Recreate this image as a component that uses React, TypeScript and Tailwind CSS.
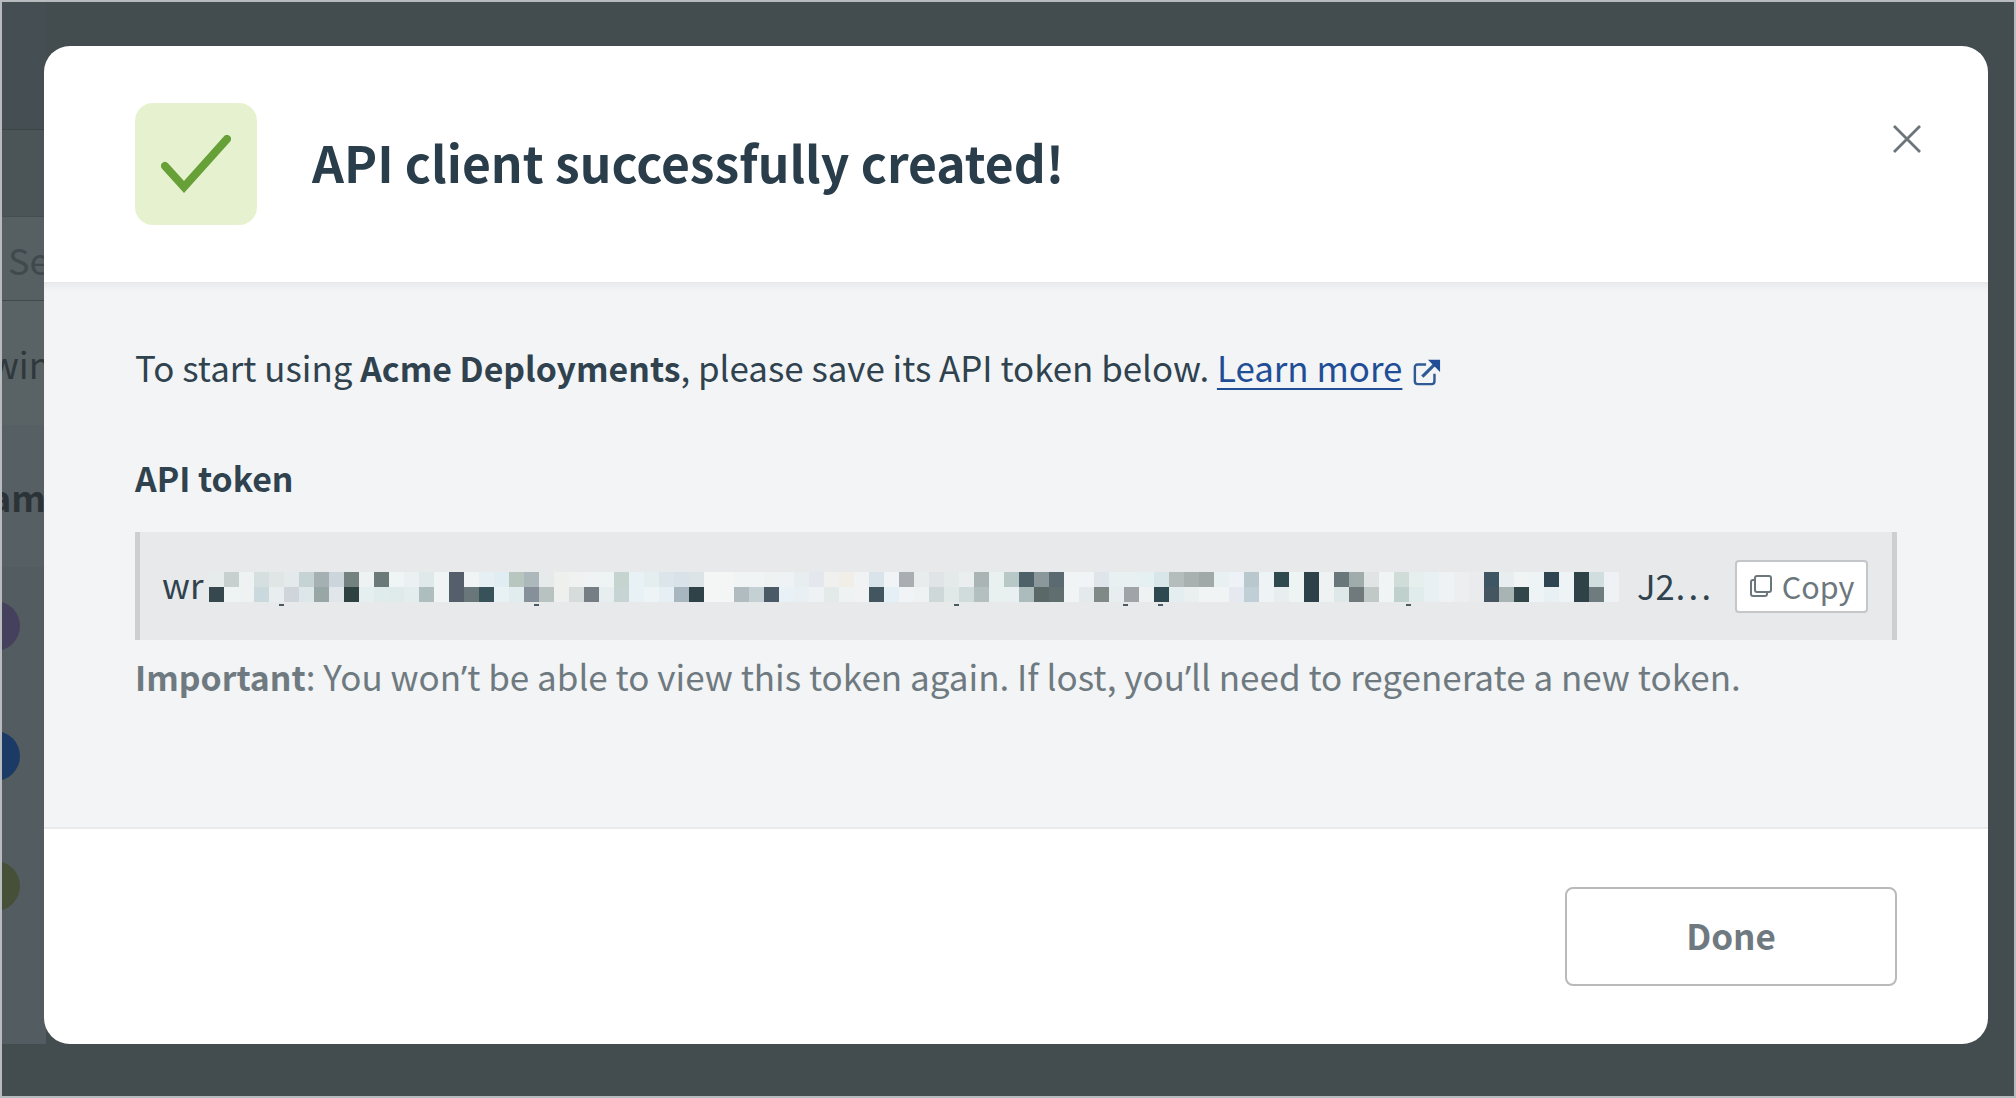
import React from 'react';

const sans = 'font-["Noto_Sans_CJK_SC","Noto_Sans",sans-serif] [font-feature-settings:"palt"]';

// pixelated part of the token: [top row colour, bottom row colour] per 15px column
const pixels: [string, string][] = [
  ['e6ebeb', '36474d'], ['c8cfcf', 'eef3f3'], ['eef2f3', 'eef2f3'], ['d5dfe0', 'c9d9dd'], ['e0e6e6', 'e8eef0'],
  ['e4eaec', 'cfd5da'], ['c6d3d5', 'dde6e8'], ['a4b0b2', '98a6a6'], ['ccd5db', 'e0e6ea'], ['74827f', '2f4242'],
  ['eef2f3', 'e6eff0'], ['6b7a78', 'e0ecec'], ['eff4f4', 'dfeaea'], ['ebf1f2', 'e4eded'], ['e0e9ea', 'aebdbd'],
  ['f0f4f5', 'f0f4f5'], ['545f6b', '545f6b'], ['f0f4f4', '69767a'], ['e6f0f4', '375258'], ['e0eef4', 'e8f2f5'],
  ['b8c6c0', 'e0ecee'], ['adb8bc', '85909a'], ['e6eaea', 'b8c2c0'], ['eef0ee', 'eef0ee'], ['f0f2f2', 'd6dcdc'],
  ['f0f3f3', '747e84'], ['eef3f4', 'e6eef0'], ['c6d4d0', 'c6d4d4'], ['e8f2f6', 'e8f2f6'], ['e4eeee', 'eef4f6'],
  ['dce6ea', 'e6f0f4'], ['d8e2e8', 'a8b6c0'], ['dce4e8', '2e4248'], ['f4f6f6', 'f4f6f6'], ['f4f6f6', 'f4f6f6'],
  ['f0f4f4', 'b0bcc0'], ['f0f4f4', 'c4d0d4'], ['eef2f2', '4a5a66'], ['eef2f4', 'e8f2f6'], ['e8eef0', 'e8f0f4'],
  ['e4e8ee', 'eef2f4'], ['f0f0ee', 'e4eaea'], ['f0eee6', 'eef2f2'], ['f0f2f4', 'f0f2f4'], ['d8e4ea', '435660'],
  ['f0f4f6', 'e4f0f6'], ['a8aeb2', 'f0f4f6'], ['e8ecec', 'eef2f2'], ['e0e4e6', 'ced8d8'], ['e4eaea', 'e0e8e8'],
  ['eaeeee', 'd0dcdc'], ['aab4b4', 'b4c0c0'], ['e8f0f0', 'e8f0f0'], ['b8c8c6', 'e8f0f2'], ['4e6068', 'acbcbc'],
  ['8a989c', '5a6868'], ['5a6a70', '606e70'], ['f0f4f4', 'f0f4f4'], ['f0f4f6', 'e4eaec'], ['dfe5ea', '808888'],
  ['e8f0f2', 'e8eef0'], ['e8f0f2', 'a0a4a8'], ['e4f0f2', 'eef2f2'], ['d8e6ea', '2e4a50'], ['b4bcbc', 'e4eef0'],
  ['a8b0b0', 'eaf0f0'], ['a0a8a8', 'f0f4f4'], ['e8f0f2', 'f0f4f4'], ['eef2f6', 'e6eaf0'], ['b8c8cc', 'c0cfd6'],
  ['eef4f6', 'eef4f6'], ['2e4a4e', 'e8eef0'], ['eef4f4', 'eef4f4'], ['2c4248', '2c4248'], ['eef2f2', 'eef2f2'],
  ['68787a', 'dfe8e8'], ['a0abab', '70797c'], ['e0e4e4', 'c0c8c8'], ['f0f4f4', 'f0f4f4'], ['d0dcd8', 'c0d0cc'],
  ['e6eeee', 'e0ecec'], ['e8f0f4', 'e8f0f4'], ['eef2f4', 'eef2f4'], ['eceef0', 'eceef0'], ['e9ebed', 'e9ebed'],
  ['3e5664', '465660'], ['e8eef0', 'a8b4b4'], ['f0f4f4', '33464a'], ['eef4f6', 'eef4f6'], ['2e4450', 'e8f0f4'],
  ['eef4f6', 'eef4f6'], ['2e4248', '2e4248'], ['d0dee0', '6e7c80'], ['eef2f4', 'eef2f4'],
];

const ticks = [70, 325, 745, 914, 949, 1197];

function TokenPixels() {
  return (
    <svg width={1411} height={36} viewBox="0 0 1411 36" shapeRendering="crispEdges" className="shrink-0">
      {pixels.map(([top, bottom], i) => (
        <g key={i}>
          <rect x={i * 15} y={0} width={15} height={15} fill={`#${top}`} />
          <rect x={i * 15} y={15} width={15} height={15} fill={`#${bottom}`} />
        </g>
      ))}
      {ticks.map((x) => (
        <rect key={x} x={x} y={32} width={5} height={2} fill="#4a5a62" />
      ))}
    </svg>
  );
}

// the CJK font draws ’ full width, so it comes from Noto Sans
function Apos() {
  return <span className='font-["Noto_Sans",sans-serif]'>’</span>;
}

export default function App() {
  return (
    <div className={`relative h-[1098px] w-[2016px] overflow-hidden border-2 border-[#b9bcbe] bg-[#434d50] pl-[42px] pt-[44px] ${sans}`}>
      {/* page behind the dialog, only a strip of it shows */}
      <div className="absolute left-0 top-0 flex h-[1042px] w-[44px] flex-col overflow-hidden text-[36px] leading-none">
        <div className="h-[128px] shrink-0 border-b border-[#3c4548] bg-[#454f53]" />
        <div className="h-[87px] shrink-0 border-b border-[#454e51] bg-[#4b5457]" />
        <div className="flex h-[84px] shrink-0 items-center border-b border-[#42494d] bg-[#565f62] pl-[6px] text-[#3f494e]">Se</div>
        <div className="flex h-[124px] shrink-0 items-center whitespace-nowrap bg-[#596265] pl-0 text-[#2f383c]">
          <span className="-ml-[12px]">win</span>
        </div>
        <div className="flex h-[142px] shrink-0 items-center whitespace-nowrap bg-[#565f63] font-bold text-[#2b3337]">
          <span className="-ml-[12px]">am</span>
        </div>
        <div className="flex flex-1 flex-col gap-[80px] bg-[#535c60] pt-[34px]">
          <div className="-ml-[32px] h-[50px] w-[50px] shrink-0 rounded-full bg-[#45405c]" />
          <div className="-ml-[32px] h-[50px] w-[50px] shrink-0 rounded-full bg-[#1c3a66]" />
          <div className="-ml-[32px] h-[50px] w-[50px] shrink-0 rounded-full bg-[#464f38]" />
        </div>
      </div>

      <div className="relative flex h-[998px] w-[1944px] flex-col overflow-hidden rounded-[26px] bg-white">
        <button className="absolute right-[66px] top-[78px] text-[#6b7478]">
          <svg width={30} height={30} viewBox="0 0 30 30" fill="none" stroke="currentColor" strokeWidth={2.8}>
            <path d="M2 2 L28 28 M28 2 L2 28" />
          </svg>
        </button>

        <div className="flex h-[236px] shrink-0 items-center gap-[55px] px-[91px]">
          <div className="flex h-[122px] w-[122px] items-center justify-center rounded-[18px] bg-[#e6f2cf]">
            <svg width={70} height={58} viewBox="0 0 70 58" fill="none" stroke="#66a036" strokeWidth={8} strokeLinecap="round">
              <path d="M4 31 L23 52 L66 4" />
            </svg>
          </div>
          <h1 className="-mt-[5px] text-[49.8px] font-bold leading-none text-[#2a3d4a]">API client successfully created!</h1>
        </div>

        <div className="flex flex-1 flex-col border-b-2 border-b-[#e8eaec] bg-[#f2f4f6] px-[91px] pt-[62px] shadow-[inset_0_8px_8px_-6px_#e0e2e4]">
          <p className="h-[46px] whitespace-pre text-[34.9px] leading-[46px] text-[#2f424e]">
            To start using <b className="text-[33.8px] font-bold">Acme Deployments</b>, please save its API token below. <a className="text-[#1f4e96] underline decoration-2 underline-offset-[6px]">Learn more</a>
            <svg width={28} height={28} viewBox="0 0 30 30" fill="none" className="ml-[11px] inline-block align-[-4px]">
              <path d="M14 7 H5 Q2 7 2 10 V25 Q2 28 5 28 H20 Q23 28 23 25 V17" stroke="#2f5a94" strokeWidth={2.6} />
              <path d="M10 20 L23 7" stroke="#2f5a94" strokeWidth={3.4} />
              <path d="M16 2 H29 V15 Z" fill="#1f4e96" />
            </svg>
          </p>

          <label className="mt-[65px] text-[33.8px] font-bold leading-[46px] text-[#2f424e]">API token</label>

          <div className="mt-[31px] flex h-[108px] items-center border-x-[5px] border-x-[#ccd0d2] bg-[#e8e9eb] pl-[22px]">
            <span className="-mt-[4px] w-[47px] shrink-0 text-[34.8px] leading-none text-[#2f424e]">wr</span>
            <div className="mt-[8px] flex w-[1428px] shrink-0 items-center">
              <TokenPixels />
            </div>
            <span className="-mt-[2px] shrink-0 whitespace-nowrap text-[34.5px] leading-none text-[#2f424e]">J2…</span>
            <button className="ml-auto mr-[24px] flex h-[53px] w-[133px] shrink-0 items-center justify-center gap-[9px] rounded-[4px] border-2 border-[#c4c7c9] bg-white text-[30.5px] leading-none text-[#6c777d]">
              <svg width={24} height={24} viewBox="0 0 24 24" fill="none" stroke="currentColor" strokeWidth={2}>
                <rect x={6} y={2} width={16} height={16} rx={2} fill="white" />
                <path d="M6 6 H4 Q2 6 2 8 V20 Q2 22 4 22 H16 Q18 22 18 20 V18" />
              </svg>
              Copy
            </button>
          </div>

          <p className="mt-[13px] text-[35px] leading-[46px] text-[#6f7a80]">
            <b className="text-[33.8px] font-bold">Important</b>: You won<Apos />t be able to view this token again. If lost, you<Apos />ll need to regenerate a new token.
          </p>
        </div>

        <div className="flex h-[215px] shrink-0 justify-end px-[91px] pt-[58px]">
          <button className="h-[99px] w-[332px] rounded-[8px] border-2 border-[#b8babb] bg-white pb-[2px] text-[35px] font-bold text-[#6f7980]">Done</button>
        </div>
      </div>
    </div>
  );
}
